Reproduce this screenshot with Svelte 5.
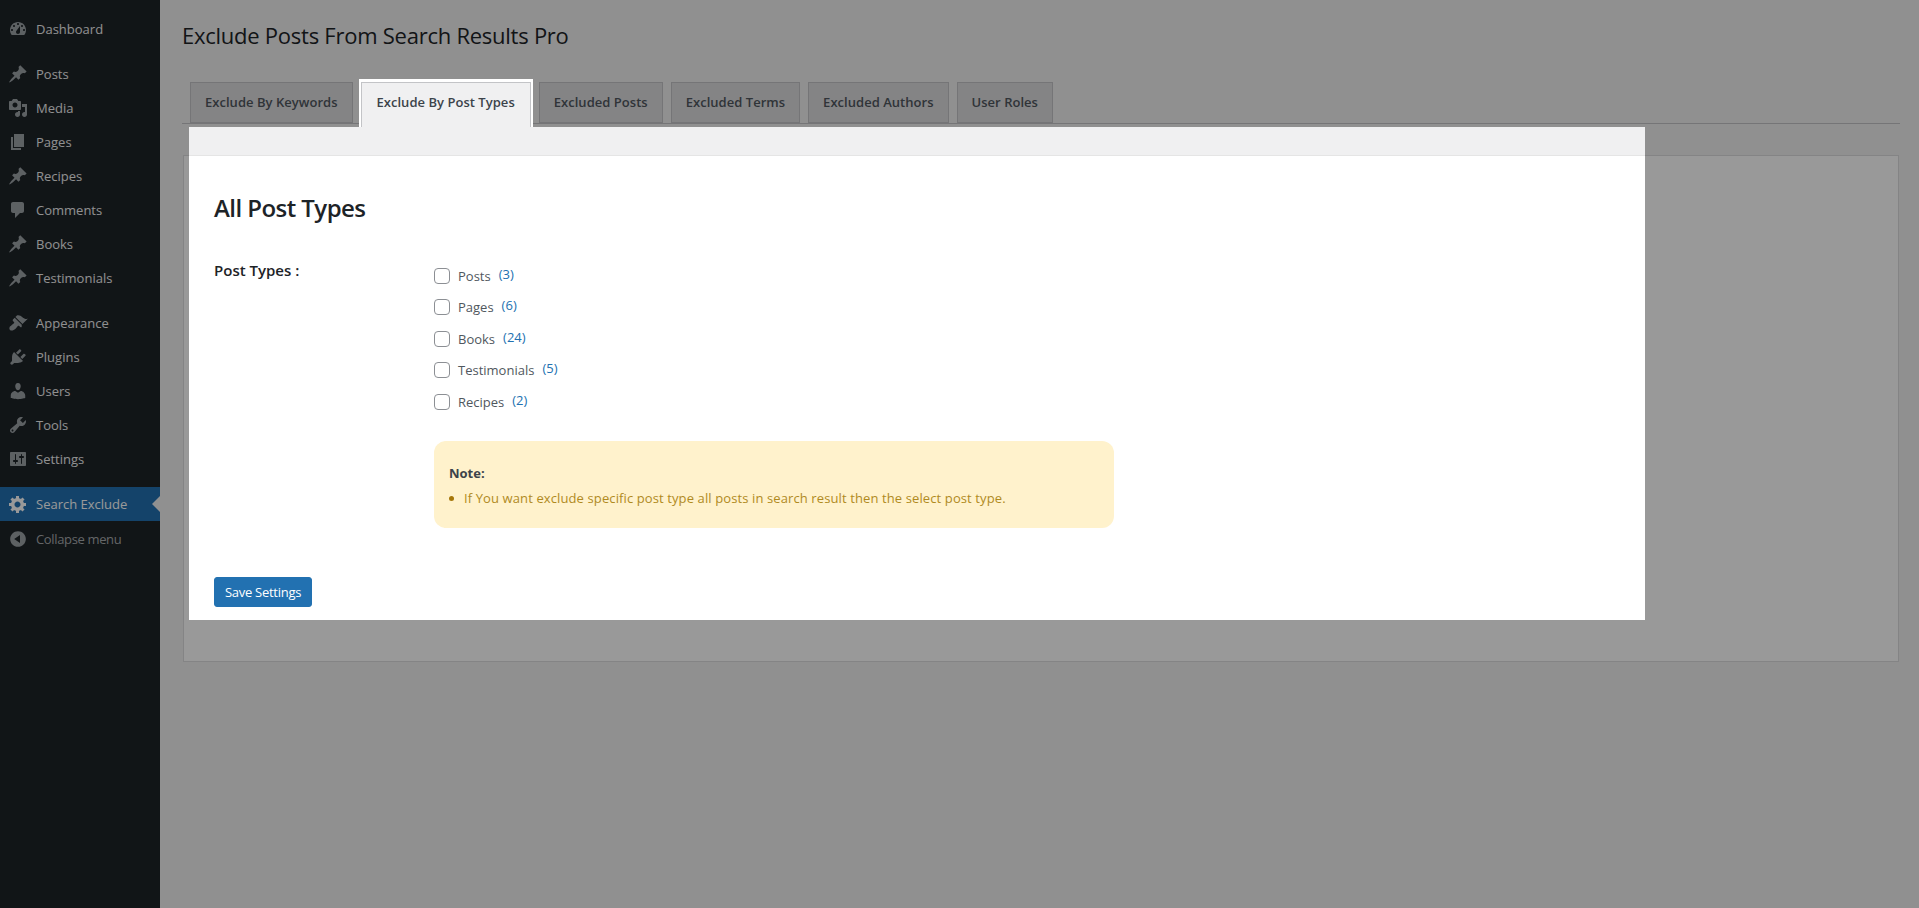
<script>
  const icons = {
    dashboard: 'M3.76 16h12.48c1.1-1.37 1.76-3.11 1.76-5 0-4.42-3.58-8-8-8s-8 3.58-8 8c0 1.89.66 3.63 1.76 5zM10 4c.55 0 1 .45 1 1s-.45 1-1 1-1-.45-1-1 .45-1 1-1zM6 6c.55 0 1 .45 1 1s-.45 1-1 1-1-.45-1-1 .45-1 1-1zm8 0c.55 0 1 .45 1 1s-.45 1-1 1-1-.45-1-1 .45-1 1-1zm-5.37 5.55L12 7v6c0 1.1-.9 2-2 2s-2-.9-2-2c0-.57.24-1.08.63-1.45zM4 10c.55 0 1 .45 1 1s-.45 1-1 1-1-.45-1-1 .45-1 1-1zm12 0c.55 0 1 .45 1 1s-.45 1-1 1-1-.45-1-1 .45-1 1-1z',
    pin: 'M10.44 3.02l1.82-1.82 6.36 6.35-1.83 1.82c-1.05-.68-2.48-.57-3.41.36l-.75.75c-.92.93-1.04 2.35-.35 3.41l-1.83 1.82-2.41-2.41-2.8 2.79c-.42.42-3.38 2.71-3.8 2.29s1.86-3.39 2.28-3.81l2.79-2.79L4.1 9.36l1.83-1.82c1.05.69 2.48.57 3.4-.36l.75-.75c.93-.92 1.05-2.35.36-3.41z',
    media: 'M13 11V4c0-.55-.45-1-1-1h-1.67L9 1H5L3.67 3H2c-.55 0-1 .45-1 1v7c0 .55.45 1 1 1h10c.55 0 1-.45 1-1zM7 4.5c1.38 0 2.5 1.12 2.5 2.5S8.38 9.5 7 9.5 4.5 8.38 4.5 7 5.62 4.5 7 4.5zM14 6h5v10.5c0 1.38-1.12 2.5-2.5 2.5S14 17.88 14 16.5s1.12-2.5 2.5-2.5c.17 0 .34.02.5.05V9h-3V6zm-4 8.05V13h2v3.5c0 1.38-1.12 2.5-2.5 2.5S7 17.88 7 16.5 8.12 14 9.5 14c.17 0 .34.02.5.05z',
    page: 'M6 15V2h10v13H6zm-1 1h8v2H3V5h2v11z',
    comment: 'M5 2h9c1.1 0 2 .9 2 2v7c0 1.1-.9 2-2 2h-2l-5 5v-5H5c-1.1 0-2-.9-2-2V4c0-1.1.9-2 2-2z',
    appearance: 'M14.48 11.06L7.41 3.99l1.5-1.5c.5-.56 2.3-.47 3.51.32 1.21.8 1.43 1.28 2.91 2.1 1.18.64 2.45 1.26 4.45.85zm-.71.71L6.7 4.7 4.93 6.47c-.39.39-.39 1.02 0 1.41l1.06 1.06c.39.39.39 1.03 0 1.42-.6.6-1.43 1.11-2.21 1.69-.35.26-.7.53-1.01.84C1.43 13.23.78 15.78 2 17s3.96.39 5.28-.92c.37-.37.65-.74.91-1.09.56-.79 1.11-1.56 1.61-2.05.39-.39 1.02-.39 1.41 0l1.06 1.06c.39.39 1.02.39 1.41 0z',
    plugins: 'M13.11 4.36L9.87 7.6 8 5.73l3.24-3.24c.35-.34 1.05-.2 1.56.32.52.51.66 1.21.31 1.55zm-8 1.77l.91-1.12 9.01 9.01-1.19.84c-.71.71-2.63 1.16-3.82 1.16H6.14L4.9 17.26c-.59.59-1.54.59-2.12 0-.59-.58-.59-1.53 0-2.12l1.24-1.24v-3.88c0-1.13.4-3.19 1.09-3.89zm7.26 3.97l3.24-3.24c.34-.35 1.04-.21 1.55.31.52.51.66 1.21.31 1.55l-3.24 3.25z',
    users: 'M10 9.25c-2.27 0-2.73-3.44-2.73-3.44C7 4.02 7.82 2 9.97 2c2.16 0 2.98 2.02 2.71 3.81 0 0-.41 3.44-2.68 3.44zm0 2.57L12.72 10c2.39 0 4.52 2.33 4.52 4.53v2.49s-3.65 1.13-7.24 1.13c-3.65 0-7.24-1.13-7.24-1.13v-2.49c0-2.25 1.94-4.48 4.47-4.48z',
    tools: 'M16.68 9.77c-1.34 1.34-3.3 1.67-4.95.99l-5.41 6.52c-.99.99-2.59.99-3.58 0s-.99-2.59 0-3.57l6.52-5.42c-.68-1.65-.35-3.61.99-4.95 1.28-1.28 3.12-1.62 4.72-1.06l-2.89 2.89 2.82 2.82 2.86-2.87c.53 1.58.18 3.39-1.08 4.65zM3.81 16.21c.4.39 1.04.39 1.43 0 .4-.4.4-1.04 0-1.43-.39-.4-1.03-.4-1.43 0-.39.39-.39 1.03 0 1.43z',
    settings: 'M18 16V4c0-.55-.45-1-1-1H3c-.55 0-1 .45-1 1v12c0 .55.45 1 1 1h14c.55 0 1-.45 1-1zM8 11h1c.55 0 1 .45 1 1s-.45 1-1 1H8v1.5c0 .28-.22.5-.5.5s-.5-.22-.5-.5V13H6c-.55 0-1-.45-1-1s.45-1 1-1h1V5.5c0-.28.22-.5.5-.5s.5.22.5.5V11zm5-2h-1c-.55 0-1-.45-1-1s.45-1 1-1h1V5.5c0-.28.22-.5.5-.5s.5.22.5.5V7h1c.55 0 1 .45 1 1s-.45 1-1 1h-1v5.5c0 .28-.22.5-.5.5s-.5-.22-.5-.5V9z',
    gear: 'M18 12h-2.18c-.17.7-.44 1.35-.81 1.93l1.54 1.54-2.1 2.1-1.54-1.54c-.58.36-1.23.63-1.91.79V19H8v-2.18c-.68-.16-1.33-.43-1.91-.79l-1.54 1.54-2.12-2.12 1.54-1.54c-.36-.58-.63-1.23-.79-1.91H1V9.03h2.17c.16-.7.44-1.35.8-1.94L2.43 5.55l2.1-2.1 1.54 1.54c.58-.37 1.24-.64 1.93-.81V2h3v2.18c.68.16 1.33.43 1.91.79l1.54-1.54 2.12 2.12-1.54 1.54c.36.59.64 1.24.8 1.94H18V12zm-8.5 1.5c1.66 0 3-1.34 3-3s-1.34-3-3-3-3 1.34-3 3 1.34 3 3 3z',
    collapse: 'M10 2.16c4.33 0 7.84 3.51 7.84 7.84s-3.51 7.84-7.84 7.84S2.16 14.33 2.16 10 5.71 2.16 10 2.16zm2 11.72V6.12L6.18 9.97z'
  };

  const menu = [
    [{ label: 'Dashboard', icon: 'dashboard' }],
    [
      { label: 'Posts', icon: 'pin' },
      { label: 'Media', icon: 'media' },
      { label: 'Pages', icon: 'page' },
      { label: 'Recipes', icon: 'pin' },
      { label: 'Comments', icon: 'comment' },
      { label: 'Books', icon: 'pin' },
      { label: 'Testimonials', icon: 'pin' }
    ],
    [
      { label: 'Appearance', icon: 'appearance' },
      { label: 'Plugins', icon: 'plugins' },
      { label: 'Users', icon: 'users' },
      { label: 'Tools', icon: 'tools' },
      { label: 'Settings', icon: 'settings' }
    ],
    [
      { label: 'Search Exclude', icon: 'gear', current: true },
      { label: 'Collapse menu', icon: 'collapse', collapse: true }
    ]
  ];

  const tabs = [
    'Exclude By Keywords',
    'Exclude By Post Types',
    'Excluded Posts',
    'Excluded Terms',
    'Excluded Authors',
    'User Roles'
  ];
  const activeTab = 1;

  const postTypes = [
    { name: 'Posts', count: 3 },
    { name: 'Pages', count: 6 },
    { name: 'Books', count: 24 },
    { name: 'Testimonials', count: 5 },
    { name: 'Recipes', count: 2 }
  ];
</script>

<div class="wrap">
  <nav class="sidebar">
    {#each menu as group}
      <ul class="menu-group">
        {#each group as item}
          <li class="menu-item" class:current={item.current} class:collapse={item.collapse}>
            <svg class="menu-icon" viewBox="0 0 20 20" width="20" height="20" aria-hidden="true">
              <path fill-rule="evenodd" d={icons[item.icon]} />
            </svg>
            <span>{item.label}</span>
          </li>
        {/each}
      </ul>
    {/each}
  </nav>

  <main class="content">
    <h1>Exclude Posts From Search Results Pro</h1>

    <div class="tabs">
      {#each tabs as tab, i}
        {#if i === activeTab}
          <div class="tab-spot">
            <a class="tab active" href="#tab">{tab}</a>
          </div>
        {:else}
          <a class="tab" href="#tab">{tab}</a>
        {/if}
      {/each}
    </div>

    <section class="panel">
      <div class="spot">
        <div class="strip"></div>
        <div class="spot-body">
          <h2>All Post Types</h2>
          <div class="form-row">
            <div class="form-label">Post Types :</div>
            <div class="form-field">
              <div class="checks">
                {#each postTypes as type}
                  <label class="check">
                    <input type="checkbox" />
                    <span class="check-name">{type.name}</span>
                    <span class="check-count">({type.count})</span>
                  </label>
                {/each}
              </div>
              <div class="note">
                <strong>Note:</strong>
                <ul>
                  <li>If You want exclude specific post type all posts in search result then the select post type.</li>
                </ul>
              </div>
            </div>
          </div>
          <button class="save" type="button">Save Settings</button>
        </div>
      </div>
    </section>
  </main>

  <div class="overlay"></div>
</div>

<style>
  :global(body) {
    background: #f0f0f1;
    font-family: "Open Sans", "Noto Sans", sans-serif;
    font-size: 13px;
    color: #3c434a;
  }

  .wrap {
    display: flex;
    min-height: 100vh;
    overflow: hidden;
  }

  .sidebar {
    flex: 0 0 160px;
    background: #1d2327;
    padding-top: 12px;
  }

  .menu-group {
    list-style: none;
    margin: 0 0 11px;
    padding: 0;
  }

  .menu-item {
    position: relative;
    display: flex;
    align-items: center;
    height: 34px;
    color: #f0f0f1;
  }

  .menu-item span {
    margin-left: 8px;
  }

  .menu-icon {
    margin-left: 8px;
    fill: rgba(240, 246, 252, 0.6);
  }

  .menu-item.current {
    background: #2271b1;
    color: #fff;
  }

  .menu-item.current .menu-icon {
    fill: #fff;
  }

  .menu-item.current::after {
    content: "";
    position: absolute;
    right: 0;
    top: 50%;
    margin-top: -8px;
    border: 8px solid transparent;
    border-right-color: #f0f0f1;
    border-left-width: 0;
  }

  .menu-item.collapse {
    color: #a7aaad;
    margin-top: 1px;
    letter-spacing: -0.35px;
  }

  .content {
    flex: 1;
    min-width: 0;
    margin: 0 19px 0 22px;
  }

  h1 {
    margin: 0;
    padding-top: 20px;
    height: 82px;
    box-sizing: border-box;
    font-size: 22px;
    line-height: 30px;
    font-weight: 400;
    color: #1d2327;
    letter-spacing: -0.25px;
  }

  .tabs {
    display: flex;
    align-items: flex-start;
    gap: 8px;
    padding-left: 8px;
    border-bottom: 1px solid #c3c4c7;
    height: 41px;
  }

  .tab {
    display: block;
    box-sizing: border-box;
    height: 41px;
    padding: 0 14px;
    border: 1px solid #c3c4c7;
    background: #dcdcde;
    color: #50575e;
    font-size: 13px;
    font-weight: 600;
    line-height: 39px;
    letter-spacing: 0.03px;
    text-decoration: none;
    white-space: nowrap;
  }

  .tab-spot {
    position: relative;
    z-index: 11;
    margin: -3px -2px -4px;
    padding: 3px 2px 0;
    background: #fff;
  }

  .tab.active {
    height: 45px;
    padding: 0 15px;
    border-bottom: 0;
    background: #f0f0f1;
    color: #3c434a;
  }

  .panel {
    margin: 31px 1px 0;
    padding: 0 0 41px;
    background: #fff;
    border: 1px solid #dcdcde;
    box-sizing: border-box;
  }

  .spot {
    position: relative;
    z-index: 11;
    width: 1456px;
    margin: -29px 0 0 5px;
    background: #fff;
  }

  .strip {
    height: 28px;
    background: #f0f0f1;
    border-bottom: 1px solid #e5e5e5;
  }

  .spot-body {
    padding: 37px 25px 13px;
  }

  h2 {
    margin: 0 0 37px;
    font-size: 24px;
    line-height: 30px;
    font-weight: 600;
    color: #1d2327;
    letter-spacing: -0.55px;
  }

  .form-row {
    display: grid;
    grid-template-columns: 220px 680px;
  }

  .form-label {
    font-size: 15px;
    line-height: 20px;
    font-weight: 600;
    color: #1d2327;
  }

  .form-field {
    padding-top: 7.8px;
  }

  .checks {
    display: flex;
    flex-direction: column;
    gap: 15.5px;
  }

  .check {
    display: flex;
    align-items: center;
    height: 16px;
    color: #50575e;
  }

  .check input {
    appearance: none;
    box-sizing: border-box;
    width: 16px;
    height: 16px;
    margin: 0 8px 0 0;
    background: #fff;
    border: 1px solid #8c8f94;
    border-radius: 4px;
  }

  .check-count {
    position: relative;
    top: -2px;
    margin-left: 8px;
    color: #2271b1;
  }

  .note {
    box-sizing: border-box;
    height: 87px;
    margin-top: 31.2px;
    padding: 22px 15px 0;
    background: #fff2cc;
    border-radius: 12px;
    line-height: 20px;
  }

  .note strong {
    display: block;
    color: #3c434a;
  }

  .note ul {
    list-style: none;
    margin: 5px 0 0;
    padding: 0 0 0 15px;
  }

  .note li {
    position: relative;
    color: #b08a1e;
    letter-spacing: 0.11px;
  }

  .note li::before {
    content: "";
    position: absolute;
    left: -15px;
    top: 8px;
    width: 5px;
    height: 5px;
    border-radius: 50%;
    background: #a6770a;
  }

  .save {
    display: block;
    height: 30px;
    margin-top: 49px;
    padding: 0 10px;
    background: #2271b1;
    border: 1px solid #2271b1;
    border-radius: 3px;
    color: #fff;
    font: inherit;
    letter-spacing: -0.28px;
  }

  .overlay {
    position: fixed;
    inset: 0;
    z-index: 10;
    background: rgba(0, 0, 0, 0.4);
  }
</style>
